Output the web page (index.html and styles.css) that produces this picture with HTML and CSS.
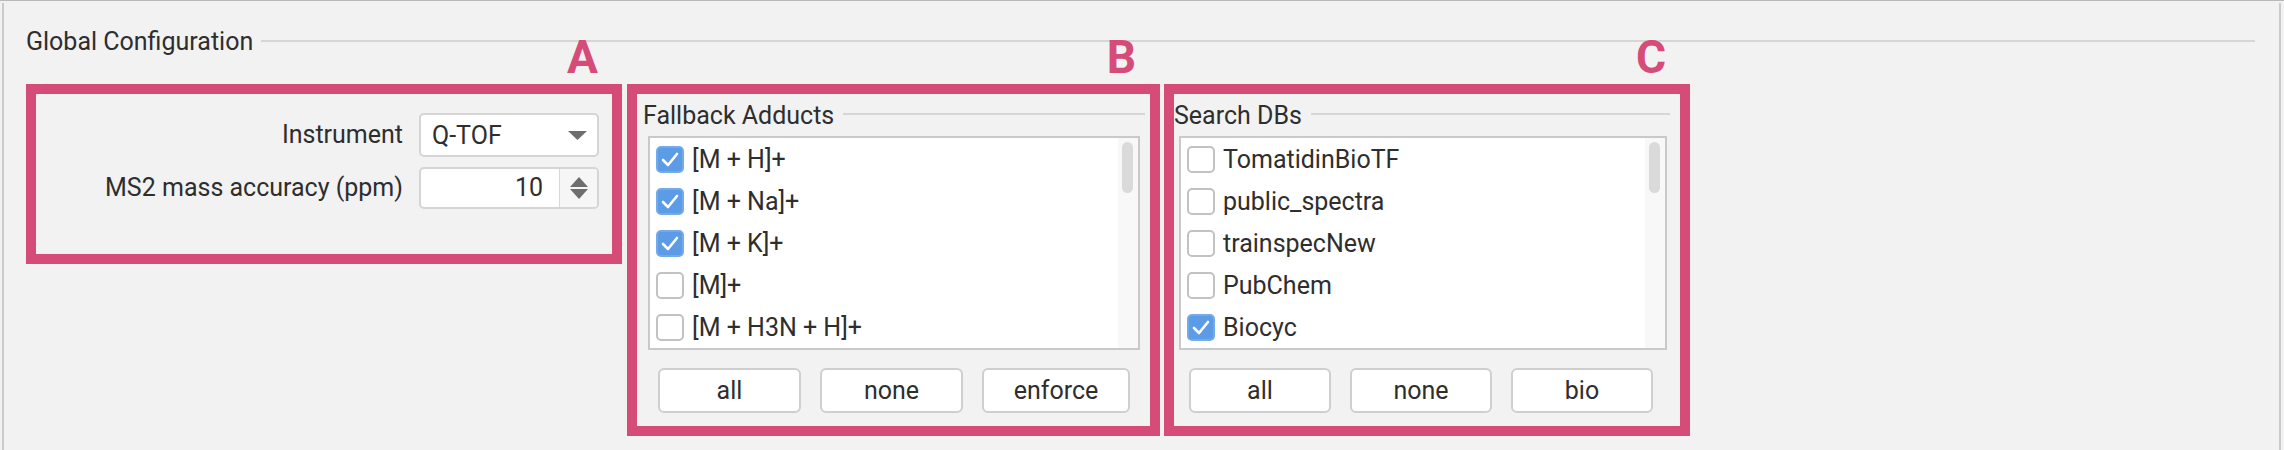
FILE: index.html
```html
<!DOCTYPE html>
<html>
<head>
<meta charset="utf-8">
<link rel="stylesheet" href="styles.css">
</head>
<body>
<div class="window">
  <div class="panel">
    <div class="group-title"><span>Global Configuration</span><i class="rule"></i></div>
    <div class="group-body">
      <div class="form">
        <label class="lbl">Instrument</label>
        <div class="combo"><span>Q-TOF</span><svg class="combo-arrow" width="19" height="9" viewBox="0 0 19 9"><polygon points="0,0 19,0 9.5,9" fill="#6e6e6e"/></svg></div>
        <label class="lbl">MS2 mass accuracy (ppm)</label>
        <div class="spin"><span class="val">10</span><div class="spin-btns"><svg width="18" height="22" viewBox="0 0 18 22"><polygon points="0,10 18,10 9,0" fill="#6e6e6e"/><polygon points="0,12 18,12 9,22" fill="#6e6e6e"/></svg></div></div>
      </div>

      <div class="sub sub-b">
        <div class="sub-title"><span>Fallback Adducts</span><i class="rule"></i></div>
        <div class="list">
          <div class="items">
            <div class="item"><span class="cb on"><svg width="24" height="23" viewBox="0 0 24 23"><path d="M5 12 L10 17 L19 6" fill="none" stroke="#fff" stroke-width="2.6" stroke-linecap="round" stroke-linejoin="round"/></svg></span>[M + H]+</div>
            <div class="item"><span class="cb on"><svg width="24" height="23" viewBox="0 0 24 23"><path d="M5 12 L10 17 L19 6" fill="none" stroke="#fff" stroke-width="2.6" stroke-linecap="round" stroke-linejoin="round"/></svg></span>[M + Na]+</div>
            <div class="item"><span class="cb on"><svg width="24" height="23" viewBox="0 0 24 23"><path d="M5 12 L10 17 L19 6" fill="none" stroke="#fff" stroke-width="2.6" stroke-linecap="round" stroke-linejoin="round"/></svg></span>[M + K]+</div>
            <div class="item"><span class="cb"></span>[M]+</div>
            <div class="item"><span class="cb"></span>[M + H3N + H]+</div>
          </div>
          <div class="scroll"><div class="thumb"></div></div>
        </div>
        <div class="btns">
          <div class="btn">all</div>
          <div class="btn">none</div>
          <div class="btn btn-wide">enforce</div>
        </div>
      </div>

      <div class="sub sub-c">
        <div class="sub-title"><span>Search DBs</span><i class="rule"></i></div>
        <div class="list list-c">
          <div class="items">
            <div class="item"><span class="cb"></span>TomatidinBioTF</div>
            <div class="item"><span class="cb"></span>public_spectra</div>
            <div class="item"><span class="cb"></span>trainspecNew</div>
            <div class="item"><span class="cb"></span>PubChem</div>
            <div class="item"><span class="cb on"><svg width="24" height="23" viewBox="0 0 24 23"><path d="M5 12 L10 17 L19 6" fill="none" stroke="#fff" stroke-width="2.6" stroke-linecap="round" stroke-linejoin="round"/></svg></span>Biocyc</div>
          </div>
          <div class="scroll"><div class="thumb"></div></div>
        </div>
        <div class="btns">
          <div class="btn btn-c">all</div>
          <div class="btn btn-c">none</div>
          <div class="btn btn-c">bio</div>
        </div>
      </div>
    </div>
  </div>

  <div class="mark mark-a"><span class="mark-label">A</span></div>
  <div class="mark mark-b"><span class="mark-label">B</span></div>
  <div class="mark mark-c"><span class="mark-label">C</span></div>
</div>
</body>
</html>
```

FILE: styles.css
```css
* { box-sizing: border-box; }

html, body {
  margin: 0;
  padding: 0;
  background: #f2f2f2;
}

body {
  font-family: Roboto, "Liberation Sans", Arial, sans-serif;
  font-size: 25px;
  color: #2e2e2e;
  width: 2284px;
  height: 450px;
  overflow: hidden;
}

.window {
  position: relative;
  height: 450px;
  border-top: 1px solid #b9b9b9;
}

.panel {
  margin: 2px 3px 0 2px;
  height: 447px;
  border-left: 2px solid #cbcbcb;
  border-right: 2px solid #cbcbcb;
  padding-top: 25px;
}

.group-title {
  display: flex;
  align-items: center;
  height: 28px;
  line-height: 28px;
  padding-left: 22px;
  padding-right: 24px;
}

.rule {
  display: block;
  flex: 1;
  height: 2px;
  background: #d6d6d6;
  margin-left: 8px;
}

.group-title .rule { margin-bottom: 2px; }

.group-body {
  display: flex;
  align-items: flex-start;
}

/* ---------- A: form ---------- */
.form {
  width: 595px;
  margin-top: 57px;
  display: grid;
  grid-template-columns: 1fr 180px;
  column-gap: 16px;
  row-gap: 10px;
}

.lbl {
  justify-self: end;
  align-self: center;
  line-height: 28px;
  white-space: nowrap;
}

.combo {
  height: 44px;
  background: #fff;
  border: 2px solid #d5d5d5;
  border-radius: 5px;
  display: flex;
  align-items: center;
  justify-content: space-between;
  padding: 0 10px 0 11px;
}

.spin {
  height: 42px;
  background: #fff;
  border: 2px solid #d5d5d5;
  border-radius: 5px;
  display: flex;
  align-items: stretch;
  overflow: hidden;
}

.spin .val {
  flex: 1;
  text-align: right;
  padding-right: 16px;
  line-height: 38px;
}

.spin-btns {
  width: 38px;
  background: #f6f6f6;
  border-left: 1px solid #d8d8d8;
  display: flex;
  align-items: center;
  justify-content: center;
}

/* ---------- B / C: sub groups ---------- */
.sub { margin-top: 46px; }
.sub-b { margin-left: 44px; width: 502px; }
.sub-c { margin-left: 29px; width: 496px; }

.sub-title {
  display: flex;
  align-items: center;
  height: 28px;
  line-height: 28px;
}

.sub-title .rule { margin-left: 9px; margin-bottom: 4px; }

.list {
  margin: 6px 0 0 5px;
  width: 492px;
  height: 214px;
  background: #fff;
  border: 2px solid #c9c9c9;
  display: flex;
  overflow: hidden;
}

.list-c { width: 488px; }

.items {
  flex: 1;
  padding-left: 6px;
}

.item {
  height: 42px;
  display: flex;
  align-items: center;
  white-space: nowrap;
}

.cb {
  width: 28px;
  height: 27px;
  margin-right: 8px;
  border: 2px solid #c2c2c2;
  border-radius: 5px;
  background: #fff;
  display: flex;
  align-items: center;
  justify-content: center;
  flex: none;
}

.cb.on {
  background: #5c9be5;
  border-color: #74aaea;
}

.scroll {
  width: 20px;
  background: #f8f8f8;
  padding: 4px 0 0 4px;
}

.thumb {
  width: 11px;
  height: 51px;
  border-radius: 6px;
  background: #dadada;
}

.btns {
  display: flex;
  gap: 19px;
  margin: 18px 0 0 15px;
}

.btn {
  width: 143px;
  height: 45px;
  background: #fff;
  border: 2px solid #cfcfcf;
  border-radius: 6px;
  display: flex;
  align-items: center;
  justify-content: center;
}

.btn-wide { width: 148px; }
.btn-c { width: 142px; }

/* ---------- annotation overlays ---------- */
.mark {
  position: absolute;
  top: 83px;
  border: 10px solid #d64c79;
}

.mark-a { left: 26px; width: 596px; height: 180px; }
.mark-b { left: 627px; width: 533px; height: 352px; }
.mark-c { left: 1164px; width: 526px; height: 352px; }

.mark-label {
  position: absolute;
  top: -60px;
  right: 14px;
  font-family: Roboto, "Liberation Sans", Arial, sans-serif;
  font-weight: 700;
  font-size: 46px;
  line-height: 46px;
  color: #d64c79;
}
```
